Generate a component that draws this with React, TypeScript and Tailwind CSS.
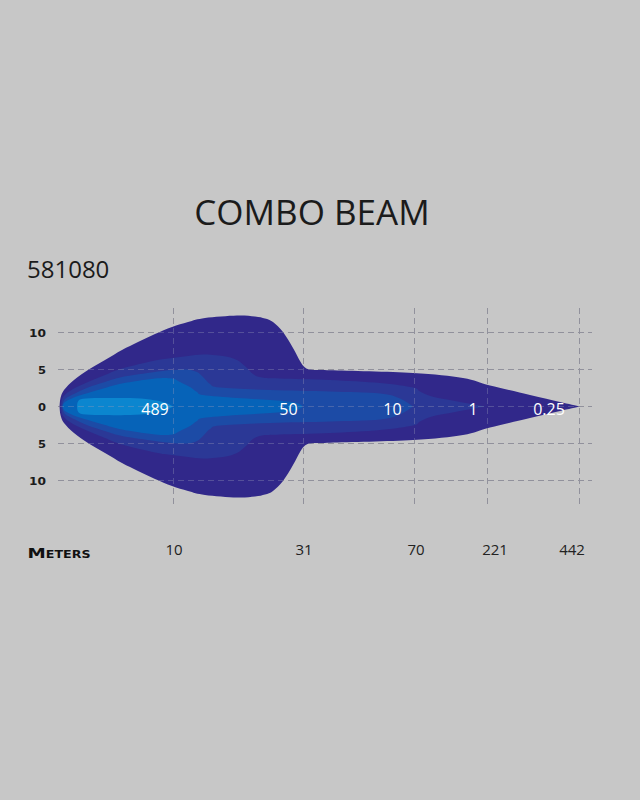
import React from "react"

const C = 406.5

// top outlines of each isolux band, mirrored around the centre line
const bands: { fill: string; pts: number[][] }[] = [
	{
		fill: "#31288a",
		pts: [
			[59.5, 406.5], [60.5, 398], [64, 390], [74, 380], [88, 370], [105, 360], [122, 350], [138, 342],
			[155, 334], [172, 327], [188, 322], [205, 318], [237, 315.5], [255, 316.5], [265, 318.5], [273, 322],
			[283, 332], [293, 348], [300, 361], [305, 367.5], [312, 369.8], [330, 370.3], [413, 373], [463, 378],
			[490, 385.5], [530, 395], [560, 402], [580, 406.5],
		],
	},
	{
		fill: "#2b3896",
		pts: [
			[61, 406.5], [63, 397], [73, 389], [88, 382], [105, 375], [122, 368.5], [155, 360.5], [172, 358],
			[188, 356], [203, 354.5], [223, 356], [237, 360], [247, 368], [253, 374], [262, 377.5], [280, 378.5],
			[330, 380], [380, 383], [413, 387.5], [420, 391.5], [432, 396.5], [455, 401], [485, 406.5],
		],
	},
	{
		fill: "#1c4ba6",
		pts: [
			[62, 406.5], [65, 399], [75, 393.5], [88, 387.5], [105, 382], [122, 377], [155, 372], [172, 370],
			[187, 369.5], [197, 372], [203, 377], [210, 384], [220, 387.5], [270, 390], [330, 391.5], [380, 393.5],
			[400, 398.5], [413, 406.5],
		],
	},
	{
		fill: "#0663b8",
		pts: [
			[62.5, 406.5], [65, 402], [75, 397], [88, 393], [105, 388], [122, 383.5], [155, 378.5], [172, 378.5],
			[180, 382], [190, 387], [197, 392], [203, 395], [237, 398], [270, 400], [295, 402.5], [303, 406.5],
		],
	},
	{
		fill: "#0b86cf",
		pts: [
			[77, 406.5], [78, 401.5], [83, 398.8], [100, 398], [130, 398], [150, 399.5], [165, 402.5], [173, 406.5],
		],
	},
]

// catmull-rom through the points, then back along the mirrored outline
function smooth(p: number[][]) {
	let d = ""
	for (let i = 0; i < p.length - 1; i++) {
		const p0 = p[i - 1] || p[i]
		const p1 = p[i]
		const p2 = p[i + 1]
		const p3 = p[i + 2] || p2
		const c1 = [p1[0] + (p2[0] - p0[0]) / 6, p1[1] + (p2[1] - p0[1]) / 6]
		const c2 = [p2[0] - (p3[0] - p1[0]) / 6, p2[1] - (p3[1] - p1[1]) / 6]
		d += ` C${c1[0].toFixed(1)},${c1[1].toFixed(1)} ${c2[0].toFixed(1)},${c2[1].toFixed(1)} ${p2[0]},${p2[1]}`
	}
	return d
}

function bandPath(pts: number[][]) {
	const top = pts
	const bottom = [...pts].reverse().map(([x, y]) => [x, 2 * C - y])
	return `M${top[0][0]},${top[0][1]}` + smooth(top) + smooth(bottom) + "Z"
}

const hLines = [332.5, 369.5, 406.5, 443.5, 480.5]
const vLines = [173.5, 303.5, 414.5, 487.5, 579.5]

const yLabels = [
	{ t: "10", y: 332.5, w: 17 },
	{ t: "5", y: 369.5, w: 8 },
	{ t: "0", y: 406.5, w: 8 },
	{ t: "5", y: 443.5, w: 8 },
	{ t: "10", y: 480.5, w: 17 },
]

const values = [
	{ t: "489", x: 155 },
	{ t: "50", x: 288.5 },
	{ t: "10", x: 392.5 },
	{ t: "1", x: 473 },
	{ t: "0.25", x: 549 },
]

const distances = [
	{ t: "10", x: 174 },
	{ t: "31", x: 304 },
	{ t: "70", x: 416 },
	{ t: "221", x: 495 },
	{ t: "442", x: 572 },
]

function Grid({ stroke, opacity }: { stroke: string; opacity: number }) {
	return (
		<g stroke={stroke} strokeWidth={1} strokeDasharray="6 4" opacity={opacity}>
			{hLines.map((y) => (
				<line key={"h" + y} x1={58} x2={592} y1={y} y2={y} />
			))}
			{vLines.map((x) => (
				<line key={"v" + x} x1={x} x2={x} y1={308} y2={505} />
			))}
		</g>
	)
}

export default function App() {
	return (
		<div className="w-[640px] h-[800px] overflow-hidden bg-[#c7c7c7] pt-[194px] font-['Open_Sans',sans-serif] text-[#1b1b1b]">
			<h1 className="pr-4 text-center text-[35px] leading-none font-normal">COMBO BEAM</h1>
			<div className="mt-[28px] pl-[27px] text-[24px] leading-none">581080</div>

			<svg className="mt-[19px] block" width={640} height={270} viewBox="0 300 640 270">
				<Grid stroke="#8d8d8d" opacity={1} />

				{bands.map((b, i) => (
					<path key={i} d={bandPath(b.pts)} fill={b.fill} />
				))}

				<Grid stroke="#9a9ab8" opacity={0.35} />

				{yLabels.map((l, i) => (
					<text
						key={i}
						x={46}
						y={l.y + 4}
						textAnchor="end"
						fontFamily="'DejaVu Sans', sans-serif"
						fontWeight="bold"
						fontSize={11}
						textLength={l.w}
						lengthAdjust="spacingAndGlyphs"
						fill="#1b1b1b"
					>
						{l.t}
					</text>
				))}

				{values.map((v) => (
					<text
						key={v.t}
						x={v.x}
						y={414.5}
						textAnchor="middle"
						fontFamily="'Open Sans', sans-serif"
						fontSize={16}
						fill="#ffffff"
					>
						{v.t}
					</text>
				))}

				<text
					x={27.5}
					y={558.3}
					fontFamily="'DejaVu Sans', sans-serif"
					fontWeight="bold"
					fontSize={14.5}
					fontVariant="small-caps"
					style={{ fontVariant: "small-caps" }}
					textLength={63}
					lengthAdjust="spacingAndGlyphs"
					fill="#111111"
				>
					Meters
				</text>

				{distances.map((d) => (
					<text
						key={d.t}
						x={d.x}
						y={554.5}
						textAnchor="middle"
						fontFamily="'Open Sans', sans-serif"
						fontSize={15}
						fill="#222222"
					>
						{d.t}
					</text>
				))}
			</svg>
		</div>
	)
}
